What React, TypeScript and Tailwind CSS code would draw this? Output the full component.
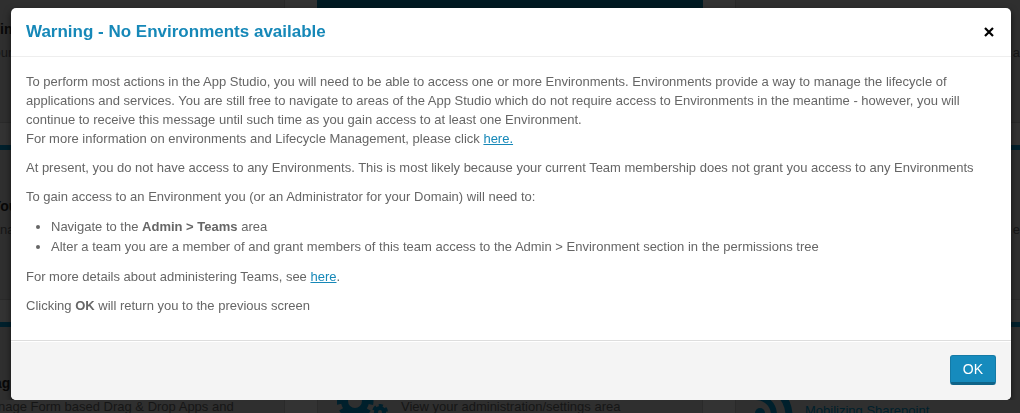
import type { ReactNode } from 'react';

const cardBase = 'h-[155px] border-t-[5px] border-t-[#00202c] border-b border-b-[#2a2a2a] bg-[#2f2f2f]';

function Card({ className = '', children }: { className?: string; children?: ReactNode }) {
  return <section className={`${cardBase} ${className}`}>{children}</section>;
}

function LeftCard({ title, text, titleShift, textShift }: { title: string; text: string; titleShift: string; textShift: string }) {
  return (
    <Card className="border-r border-r-[#2a2a2a] pt-[46px]">
      <h3 className={`whitespace-nowrap text-sm leading-5 font-bold text-[#080808] ${titleShift}`}>{title}</h3>
      <p className={`mt-1 whitespace-nowrap text-[13px] leading-5 text-[#161616] ${textShift}`}>{text}</p>
    </Card>
  );
}

function RightCard({ text }: { text: string }) {
  return (
    <Card className="border-l border-l-[#2a2a2a] pt-[70px]">
      <p className="whitespace-nowrap text-right text-[13px] leading-5 text-[#161616]">{text}</p>
    </Card>
  );
}

function Gears() {
  return (
    <svg className="h-12 w-[54px] shrink-0" viewBox="0 0 54 48" fill="none" stroke="#00202c" aria-hidden="true">
      <circle cx="18" cy="12" r="10.5" strokeWidth="7" />
      <circle cx="18" cy="12" r="15.5" strokeWidth="6" strokeDasharray="7 5.17" strokeDashoffset="3.5" />
      <circle cx="43" cy="23" r="4" strokeWidth="4" />
      <circle cx="43" cy="23" r="6.5" strokeWidth="3" strokeDasharray="4 2.81" strokeDashoffset="-1.4" />
    </svg>
  );
}

function Feed() {
  return (
    <svg className="h-10 w-10 shrink-0" viewBox="0 0 40 40" fill="none" aria-hidden="true">
      <circle cx="5" cy="20" r="5" fill="#00202c" />
      <path d="M0 4a18 18 0 0 1 19 18" stroke="#00202c" strokeWidth="6" />
      <path d="M0 -9a32 32 0 0 1 34 31" stroke="#00202c" strokeWidth="7" />
    </svg>
  );
}

function Backdrop() {
  return (
    <div className="fixed inset-0 overflow-hidden bg-[#333333]" aria-hidden="true">
      <div className="-mt-8 grid grid-cols-[1fr_386px_1fr] gap-x-8 gap-y-[22px]">
        <Card className="border-r border-r-[#2a2a2a] pt-[46px]">
          <h3 className="-ml-[31px] whitespace-nowrap text-sm leading-5 font-bold text-[#080808]">Admin</h3>
          <p className="-ml-[14px] mt-1 whitespace-nowrap text-[13px] leading-5 text-[#161616]">Your</p>
        </Card>
        <section className="h-[155px] bg-[#001a22]" />
        <RightCard text="a" />

        <LeftCard title="You" text="Mana" titleShift="-ml-2" textShift="-ml-[18px]" />
        <Card />
        <RightCard text="e" />

        <LeftCard
          title="Manag"
          text="Manage Form based Drag & Drop Apps and"
          titleShift="-ml-[34px]"
          textShift="-ml-[20px]"
        />
        <Card className="border-x border-x-[#2a2a2a] pt-[62px] pl-[19px]">
          <div className="flex gap-[10px]">
            <Gears />
            <p className="pt-2 text-[13px] leading-5 text-[#161616]">View your administration/settings area</p>
          </div>
        </Card>
        <Card className="border-l border-l-[#2a2a2a] pt-[66px] pl-[19px]">
          <div className="flex gap-[10px]">
            <Feed />
            <p className="pt-2 text-[13px] leading-5 text-[#00202c]">Mobilizing Sharepoint</p>
          </div>
        </Card>
      </div>
    </div>
  );
}

const link = 'text-[#1688b8] underline';

export default function App() {
  return (
    <div className="font-['Liberation_Sans',Arial,sans-serif]">
      <Backdrop />
      <main className="relative pt-2 pr-[9px] pl-[11px]">
        <div
          role="dialog"
          aria-modal="true"
          aria-labelledby="dialog-title"
          className="overflow-hidden rounded-[5px] bg-white text-[13px] leading-[19px] text-[#666666] shadow-[0_3px_7px_rgba(0,0,0,0.6)]"
        >
          <header className="flex items-center justify-between border-b border-[#eeeeee] px-[15px] py-3">
            <h1 id="dialog-title" className="text-[17px] leading-6 font-bold text-[#1688b8]">
              Warning - No Environments available
            </h1>
            <button type="button" aria-label="Close" className="flex h-6 w-[14px] items-center justify-center text-black">
              <svg className="h-[10px] w-[10px]" viewBox="0 0 10 10" aria-hidden="true">
                <path d="M1 1l8 8M9 1l-8 8" stroke="currentColor" strokeWidth="2.2" />
              </svg>
            </button>
          </header>

          <div className="flex flex-col gap-[10px] px-[15px] pt-[15px] pb-[25px]">
            <p>
              To perform most actions in the App Studio, you will need to be able to access one or more Environments.
              Environments provide a way to manage the lifecycle of applications and services. You are still free to
              navigate to areas of the App Studio which do not require access to Environments in the meantime - however,
              you will continue to receive this message until such time as you gain access to at least one Environment.
              <br />
              For more information on environments and Lifecycle Management, please click{' '}
              <a href="#lifecycle" className={link}>here.</a>
            </p>
            <p>
              At present, you do not have access to any Environments. This is most likely because your current Team
              membership does not grant you access to any Environments
            </p>
            <p>To gain access to an Environment you (or an Administrator for your Domain) will need to:</p>
            <ul className="list-disc pt-px pl-[25px] leading-5">
              <li>
                Navigate to the <strong>Admin &gt; Teams</strong> area
              </li>
              <li>
                Alter a team you are a member of and grant members of this team access to the Admin &gt; Environment
                section in the permissions tree
              </li>
            </ul>
            <p>
              For more details about administering Teams, see <a href="#teams" className={link}>here</a>.
            </p>
            <p>
              Clicking <strong>OK</strong> will return you to the previous screen
            </p>
          </div>

          <footer className="flex justify-end border-t border-[#dddddd] bg-[#f4f4f4] px-[15px] pt-[14px] pb-[15px] shadow-[inset_0_1px_0_#ffffff]">
            <button
              type="button"
              className="h-[30px] rounded-[3px] border border-b-[3px] border-[#147aa6] border-b-[#0f6489] bg-[#168bbd] px-3 text-sm leading-[26px] text-white"
            >
              OK
            </button>
          </footer>
        </div>
      </main>
    </div>
  );
}
